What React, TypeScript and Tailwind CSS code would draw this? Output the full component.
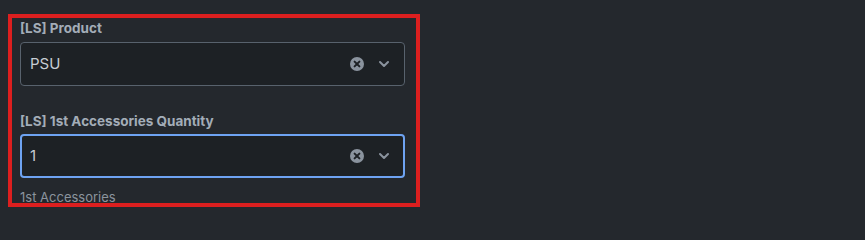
import { ChevronDown } from "lucide-react";

function ClearIcon() {
  return (
    <svg width="14" height="14" viewBox="0 0 14 14" className="shrink-0">
      <circle cx="7" cy="7" r="7" fill="#8a939e" />
      <path d="M4.6 4.6 L9.4 9.4 M9.4 4.6 L4.6 9.4" stroke="#1d2125" strokeWidth="2" strokeLinecap="round" />
    </svg>
  );
}

function SelectField({ value, focused }: { value: string; focused?: boolean }) {
  return (
    <div
      className={`w-[385px] h-[44px] rounded-[4px] bg-[#1d2125] flex items-center ${
        focused ? "border-2 border-[#6ea3f2] pl-[8px] pr-[11px]" : "border border-[#58626d] pl-[9px] pr-[12px]"
      }`}
    >
      <span className="flex-1 text-[15px] text-[#c7cdd4]">{value}</span>
      <ClearIcon />
      <ChevronDown className="ml-[12px] w-[16px] h-[16px] text-[#8a939e]" strokeWidth={3} />
    </div>
  );
}

export default function App() {
  return (
    <div
      className="w-full min-h-screen h-[212px] bg-[#24282d] overflow-hidden pt-[14px] pl-[8px]"
      style={{ fontFamily: "Inter, 'Noto Sans', sans-serif" }}
    >
      <div className="w-[412px] h-[193px] border-4 border-[#dc1f1f] overflow-hidden pl-[8px] pt-[1px]">
        <div className="h-[18px] leading-[18px] text-[13.5px] font-bold text-[#a3adb8]">[LS] Product</div>
        <div className="mt-[5px]">
          <SelectField value="PSU" />
        </div>
        <div className="mt-[26px] h-[18px] leading-[18px] text-[13.5px] font-bold text-[#a3adb8]">
          [LS] 1st Accessories Quantity
        </div>
        <div className="mt-[4px]">
          <SelectField value="1" focused />
        </div>
        <div className="mt-[10px] h-[18px] leading-[18px] text-[13px] text-[#8b949e]">1st Accessories</div>
      </div>
    </div>
  );
}
